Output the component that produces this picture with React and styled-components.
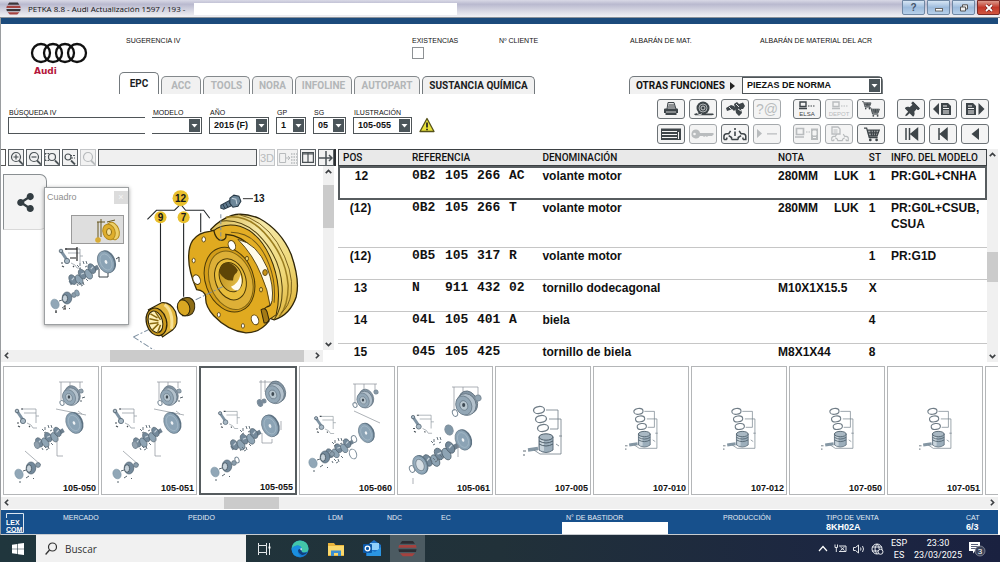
import React from "react";

// React Icons
import { FaShareAlt, FaThumbtack } from "react-icons/fa";

// Styled Components
import styled, { createGlobalStyle, css } from "styled-components";

// Data
const tabs = [
  { name: "EPC", width: 40, active: true },
  { name: "ACC", width: 40, disabled: true },
  { name: "TOOLS", width: 47, disabled: true },
  { name: "NORA", width: 41, disabled: true },
  { name: "INFOLINE", width: 57, disabled: true },
  { name: "AUTOPART", width: 66, disabled: true },
  { name: "SUSTANCIA QUÍMICA", width: 113 },
];

const filters = [
  { id: "modelo", label: "MODELO", value: "", width: 50, open: true },
  { id: "ano", label: "AÑO", value: "2015 (F)", width: 60 },
  { id: "gp", label: "GP", value: "1", width: 30 },
  { id: "sg", label: "SG", value: "05", width: 33 },
  { id: "ilustracion", label: "ILUSTRACIÓN", value: "105-055", width: 59 },
];

const parts = [
  { pos: "12", ref: ["0B2", "105", "266", "AC"], name: "volante motor", note: ["280MM", "LUK"], st: "1", info: "PR:G0L+CNHA" },
  { pos: "(12)", ref: ["0B2", "105", "266", "T"], name: "volante motor", note: ["280MM", "LUK"], st: "1", info: "PR:G0L+CSUB, CSUA", tall: true },
  { pos: "(12)", ref: ["0B5", "105", "317", "R"], name: "volante motor", note: [], st: "1", info: "PR:G1D" },
  { pos: "13", ref: ["N", "911", "432", "02"], name: "tornillo dodecagonal", note: ["M10X1X15.5"], st: "X", info: "" },
  { pos: "14", ref: ["04L", "105", "401", "A"], name: "biela", note: [], st: "4", info: "" },
  { pos: "15", ref: ["045", "105", "425", ""], name: "tornillo de biela", note: ["M8X1X44"], st: "8", info: "" },
];

const sheets = [
  { code: "105-050", kind: "crank" },
  { code: "105-051", kind: "crank" },
  { code: "105-055", kind: "crankWide", active: true },
  { code: "105-060", kind: "crankLow" },
  { code: "105-061", kind: "crankBig" },
  { code: "107-005", kind: "pistonBig" },
  { code: "107-010", kind: "piston" },
  { code: "107-012", kind: "piston" },
  { code: "107-050", kind: "piston" },
  { code: "107-051", kind: "piston" },
];

// Toolbar drawings, all on a 26x18 canvas
const Cart = ({ x = 0, y = 0, s = 1 }) => (
  <g transform={`translate(${x} ${y}) scale(${s})`} fill="none" stroke="currentColor">
    <path d="M3 3h11.500l-2 5.500H4.500z" fill="currentColor" fillOpacity=".45" stroke="none" />
    <path d="M0 1h2.500l2.500 9h8M3 3h11.500l-2 5.500H4.500M4 5.500h9.500M6.500 3l.8 5M9 3v5M11.500 3l-.6 5" strokeWidth="1.200" />
    <circle cx="6" cy="12.300" r="1.300" fill="currentColor" stroke="none" />
    <circle cx="12" cy="12.300" r="1.300" fill="currentColor" stroke="none" />
  </g>
);

const Page = ({ x }) => (
  <g transform={`translate(${x} 3)`}>
    <path d="M0 0h7l3 3v9H0z" fill="currentColor" />
    <path d="M2 3h4M2 5.500h6M2 8h6M2 10h6" stroke="#f4f4f4" />
  </g>
);

const Car = ({ x = 0, y = 0, s = 1 }) => (
  <path
    transform={`translate(${x} ${y}) scale(${s})`}
    d="M1 12V9q0-3 3-3h2l2-3M9 12v-2l-3-2M4 12H1M9 12h7M16 12v-2l3-2M17 3l2 3h2q3 0 3 3v3h-3M4 12v-2M21 12v-2"
    fill="none"
    stroke="currentColor"
    strokeWidth="1.600"
  />
);

const Monitor = ({ x }) => (
  <>
    <path d={`M${x} 2h6v4.500h-6zM${x - 1} 8.500h8`} fill="none" stroke="currentColor" strokeWidth="1.400" />
    <path d={`M${x + 8} 6h7`} stroke="currentColor" strokeDasharray="1.500 1" />
  </>
);

const drawings = {
  print: (
    <>
      <path d="M9 9l1-6.500h6L18 9" fill="#ddd" stroke="currentColor" />
      <path d="M10.500 5h6M10 7h7" stroke="currentColor" />
      <path d="M6 9.500q0-1 1-1h12q1 0 1 1V13h-1.500v2h-11v-2H6z" fill="currentColor" />
      <path d="M8 12h10" stroke="#f4f4f4" strokeWidth=".8" />
    </>
  ),
  wheel: (
    <>
      <circle cx="13" cy="8" r="6.500" fill="currentColor" />
      <circle cx="13" cy="8" r="4" fill="none" stroke="#c9cccd" strokeWidth=".8" />
      <circle cx="13" cy="8" r="2" fill="none" stroke="#e8e8e8" strokeWidth=".8" />
      <path d="M4 14l5-1.500 2 1h12l1 1-2 .8H5z" fill="currentColor" />
      <path d="M7 13.500l3 1.200 2-1" fill="none" stroke="#fff" strokeWidth=".8" />
    </>
  ),
  binoculars: (
    <>
      <path d="M4 8l5-3 3 1 2 3-2 2-2-2-2 1-3 1z" fill="currentColor" />
      <path d="M12 4l3-2 2 2 4-1.500 2 3.500-2 3h-2l1 4-3 3-3-3-1-5z" fill="currentColor" />
      <path d="M14 4l3 3M16 9l3 2M7 7l2 2" stroke="#f4f4f4" strokeWidth=".9" />
    </>
  ),
  mail: (
    <text x="13" y="14" textAnchor="middle" fontSize="14" fontFamily="Liberation Sans" fill="currentColor">?@</text>
  ),
  elsa: (
    <>
      <Monitor x={6} />
      <text x="13" y="16" textAnchor="middle" fontSize="6" fontFamily="Liberation Sans" fill="currentColor">ELSA</text>
    </>
  ),
  depot: (
    <>
      <Monitor x={7} />
      <text x="13" y="16" textAnchor="middle" fontSize="6" fontFamily="Liberation Sans" fill="currentColor">DEPOT</text>
    </>
  ),
  carts: (
    <>
      <Cart x={4} y={1} s={0.62} />
      <Cart x={11} y={7} s={0.72} />
    </>
  ),
  pin: <FaThumbtack x="6" y="2" width="14" height="14" transform="rotate(45 13 9)" />,
  prevPage: (
    <>
      <path d="M9 3v12L3 9z" fill="currentColor" />
      <Page x={11} />
    </>
  ),
  nextPage: (
    <>
      <Page x={4} />
      <path d="M16.500 3v12l6-6z" fill="currentColor" />
    </>
  ),
  list: (
    <>
      <path d="M3 3.500h20V15H3z" fill="currentColor" />
      <path d="M4 6.500h15M4 9.500h15M4 12.500h15M20.500 7v7" stroke="#f4f4f4" />
    </>
  ),
  key: (
    <>
      <path d="M6 4.500a4.500 4.500 0 1 0 4 6.500h3l1 1 1.500-1 1.500 1 1-1h4l2-2-1-1H10a4.500 4.500 0 0 0-4-3.500z" fill="currentColor" />
      <circle cx="4.500" cy="9" r="1.300" fill="#f4f4f4" />
    </>
  ),
  carInfo: (
    <>
      <Car x={1} y={3} s={0.95} />
      <path d="M13 3v2M13 6.500V11" stroke="currentColor" strokeWidth="1.600" />
    </>
  ),
  command: <path d="M3 4l5 4.500L3 13zM13 8.200h10v1.300H13z" fill="currentColor" />,
  server: (
    <>
      <path d="M2.500 3.500h7v6h-7zM1 12h9" fill="none" stroke="currentColor" strokeWidth="1.700" />
      <path d="M12 7h4" stroke="currentColor" strokeDasharray="1.500 1" />
      <path d="M17 3.500h7V15h-7z" fill="currentColor" />
      <path d="M19 6h3v4h-3zM19 12.500h3" fill="#f4f4f4" stroke="#f4f4f4" />
    </>
  ),
  carDoc: (
    <>
      <path d="M6 2h6l2 2v5H6z" fill="none" stroke="currentColor" strokeWidth="1.300" />
      <path d="M7.500 5h4M7.500 7h4" stroke="currentColor" />
      <Car x={5} y={7} s={0.72} />
    </>
  ),
  cart: <Cart x={6} y={2} s={1.05} />,
  first: <path d="M8 3v12M11.500 3v12M19.500 3.500v11L13 9z" fill="currentColor" stroke="currentColor" strokeWidth="1.500" />,
  stepBack: <path d="M9 3v12M17 3.500v11L10.500 9z" fill="currentColor" stroke="currentColor" strokeWidth="1.500" />,
  back: <path d="M17 3v12L9.500 9z" fill="currentColor" />,
};

const toolGroups = [
  [
    [["print", "Imprimir"], ["wheel", "Neumáticos"], ["binoculars", "Buscar pieza"], ["mail", "Consulta", true]],
    [["list", "Lista"], ["key", "Clave", true], ["carInfo", "Datos del vehículo"], ["command", "Comando", true]],
  ],
  [
    [["elsa", "ELSA"], ["depot", "DEPOT", true], ["carts", "Pedidos"]],
    [["server", "Servidor", true], ["carDoc", "Documentos", true], ["cart", "Cesta"]],
  ],
  [
    [["pin", "Fijar"], ["prevPage", "Página anterior"], ["nextPage", "Página siguiente"]],
    [["first", "Primero"], ["stepBack", "Anterior"], ["back", "Atrás"]],
  ],
];

const Lens = ({ children, r = 4.5, cx = 7 }) => (
  <g fill="none" stroke="currentColor" strokeWidth="1.200">
    <circle cx={cx} cy="6" r={r} />
    <path d={`M${cx + 3} 9.500l4 4`} strokeWidth="1.800" />
    {children}
  </g>
);

const DropButton = () => (
  <DropIcon viewBox="0 0 11 13" aria-hidden="true">
    <rect width="11" height="13" fill="#4b555a" />
    <path d="M2.500 5h6l-3 3.500z" fill="#fff" />
  </DropIcon>
);

const Petka = ({ size, color = "#3b3438" }) => (
  <svg width={size} height={size} viewBox="0 0 14 14" aria-hidden="true">
    <path d="M3 1.500h8l1.500 2h-11z" fill={color} />
    <path d="M.8 4.500h12.400l.5 2H.3z" fill="#a5423f" />
    <path d="M.3 7.500h13.400l-.5 2H.8z" fill={color} />
    <path d="M1.500 10.500h11l-2 2.200h-7z" fill="#a5423f" />
  </svg>
);

const ScrollBar = ({ vertical, corner, before, size, after }) => (
  <Track $vertical={vertical} $corner={corner}>
    <Arrow viewBox="0 0 10 10" aria-hidden="true">
      <path d={vertical ? "M2.500 6.500L5 4l2.500 2.500" : "M6.500 2.500L4 5l2.500 2.500"} />
    </Arrow>
    <Rail $grow={before} />
    <Thumb $grow={size} />
    <Rail $grow={after} />
    <Arrow viewBox="0 0 10 10" aria-hidden="true">
      <path d={vertical ? "M2.500 3.500L5 6l2.500-2.500" : "M3.500 2.500L6 5 3.500 7.500"} />
    </Arrow>
  </Track>
);

// Small exploded views of the crankshaft
const Wheel = ({ x, y, s = 1 }) => (
  <g transform={`translate(${x} ${y}) scale(${s})`}>
    <ellipse cx="3" cy="-1" rx="7" ry="9" transform="rotate(-22)" fill="#8496a5" stroke="#5b6b78" strokeWidth=".6" />
    <ellipse cx="1" rx="7.500" ry="8.500" transform="rotate(-22)" fill="#b3c1cc" stroke="#5f6f7c" strokeWidth=".6" />
    <ellipse cx="-1" rx="6" ry="7.500" transform="rotate(-22)" fill="#93a7b6" stroke="#60717f" strokeWidth=".5" />
    <ellipse cx="-1" rx="3" ry="3.800" transform="rotate(-22)" fill="#b9c7d0" stroke="#60717f" strokeWidth=".5" />
    <ellipse cx="-1" rx="1.200" ry="1.600" fill="#3f4a53" />
  </g>
);

const Disc = ({ x, y, s = 1 }) => (
  <g transform={`translate(${x} ${y}) rotate(-24) scale(${s})`}>
    <ellipse cx="1.500" rx="8" ry="11.500" fill="#5f7485" />
    <ellipse rx="8" ry="11.500" fill="#8ba3b5" stroke="#5b6d7b" strokeWidth=".6" />
    <ellipse rx="5.500" ry="8.500" fill="none" stroke="#a9bcc9" strokeWidth=".7" />
    <ellipse rx="1.300" ry="2" fill="#eef2f5" />
  </g>
);

const Ring = ({ x, y, rx = 2.5, ry = 3.5, fill = "none" }) => (
  <ellipse cx={x} cy={y} rx={rx} ry={ry} transform={`rotate(-20 ${x} ${y})`} fill={fill} stroke="#7c8c99" strokeWidth="1" />
);

const Crank = ({ x, y, s = 1 }) => (
  <g transform={`translate(${x} ${y}) rotate(-30) scale(${s})`}>
    <path d="M-15 0h30" stroke="#6d7f8e" strokeWidth="4" />
    {[-11, -6, -1, 4, 9].map((cx, i) => (
      <ellipse key={cx} cx={cx} cy={i % 2 ? 1.5 : -1.5} rx="3" ry="4.800" fill={i % 2 ? "#8ea4b4" : "#74899a"} stroke="#526370" strokeWidth=".6" />
    ))}
    <path d="M-12-1.500l3-1M-2-2l3 .5M8-1.500l3-1" stroke="#c9d4dc" strokeWidth="1" />
  </g>
);

const Rod = ({ x, y, s = 1 }) => (
  <g transform={`translate(${x} ${y}) scale(${s})`}>
    <path d="M-1-2l6 9" stroke="#7e92a2" strokeWidth="3" />
    <circle cx="-1" cy="-2" r="1.800" fill="#a9b9c5" stroke="#4f5f6c" strokeWidth=".8" />
    <circle cx="5" cy="8" r="2.600" fill="#a9b9c5" stroke="#5c6d7a" strokeWidth=".9" />
    <path d="M4-4h14v14M6 0h12M18 3h3M9 10l4 2 2 3h4" fill="none" stroke="#8b949b" strokeWidth=".7" />
    <path d="M3-4h2M11 13l1 1M-1 10h2M0 13l2 1" stroke="#424b52" strokeWidth="1.200" />
  </g>
);

const Ticks = ({ x, y }) => (
  <path
    transform={`translate(${x} ${y})`}
    d="M0 0l2 2M3-2v3M6-4l1 3M9-4l1 3M2 4l2-1M8 2l2-1M2 17l2 2M6 17l1 3M9 14l2 2M4 21l2-1M0 19l1 2"
    stroke="#66737d"
    strokeWidth="1"
    fill="none"
  />
);

const Bearing = ({ x, y }) => (
  <g transform={`translate(${x} ${y})`}>
    <ellipse cx="-12" cy="6" rx="4" ry="5" transform="rotate(-24 -12 6)" fill="#91a7b7" stroke="#7890a1" strokeWidth=".5" />
    <ellipse cx="0" rx="4.800" ry="6" fill="#73899b" stroke="#4e606e" strokeWidth=".7" />
    <ellipse cx="-2" cy=".5" rx="2.600" ry="3.800" fill="#c7d2da" stroke="#3f4f5b" strokeWidth=".8" />
    <circle cx="7" cy="-3" r="2.400" fill="#8b9eac" stroke="#5c6c79" strokeWidth=".7" />
    <path d="M-8 3l3-1M-5 10l3-2M2 10l1 1M-12 14h2" stroke="#59666f" strokeWidth="1" />
  </g>
);

const Bracket = ({ d }) => <path d={d} fill="none" stroke="#899198" strokeWidth=".7" />;

const sheetDrawings = {
  crank: (
    <>
      <Bracket d="M55 15h24M57 15v18M66 15v8M76 15v6" />
      <Wheel x={66} y={30} s={1.05} />
      <Ring x={58} y={36} rx={2} ry={2.5} />
      <Ring x={77} y={24} rx={2} ry={2} fill="#95a5b1" />
      <path d="M78 31l3-1M77 33v2" stroke="#58646d" />
      <Bracket d="M52 42l30 6M21 84l16 14" />
      <Disc x={70} y={56} s={0.95} />
      <Rod x={14} y={46} />
      <Crank x={46} y={71} s={1.05} />
      <Ring x={33} y={78} fill="#91a1ae" />
      <Ticks x={38} y={62} />
      <Bracket d="M53 72v17h6M74 44l4 3" />
      <Bearing x={27} y={101} />
    </>
  ),
  crankWide: (
    <>
      <Bracket d="M60 12v19M64 12v12M58 14h20" />
      <Wheel x={73} y={26} s={1.2} />
      <Ring x={59} y={35} fill="#76899a" />
      <Ring x={63} y={33} rx={2} ry={2} fill="#76899a" />
      <Disc x={69} y={58} s={0.98} />
      <Rod x={20} y={47} s={0.9} />
      <Crank x={45} y={72} s={1.12} />
      <Ticks x={39} y={62} />
      <Bracket d="M61 65v10h10v-4M80 53v9" />
      <Bearing x={26} y={98} />
      <Ring x={36} y={92} rx={2} ry={3} />
    </>
  ),
  crankLow: (
    <>
      <Bracket d="M53 17h24M55 17v20M64 17v9M75 17v6" />
      <Wheel x={64} y={33} />
      <Ring x={55} y={38} rx={2} ry={2.5} />
      <Ring x={76} y={25} rx={2} ry={2} fill="#8799a7" />
      <Bracket d="M54 44l26 12" />
      <Disc x={66} y={66} s={0.88} />
      <Rod x={17} y={53} s={0.9} />
      <Crank x={40} y={82} />
      <Ticks x={32} y={75} />
      <Ring x={54} y={72} />
      <Ring x={53} y={87} rx={3.5} ry={5} />
      <Bearing x={25} y={90} />
    </>
  ),
  crankBig: (
    <>
      <Bracket d="M54 20h26M56 20v24M65 20v8M80 20v9" />
      <Wheel x={67} y={38} s={1.3} />
      <Ring x={57} y={46} />
      <Ring x={80} y={31} rx={3} ry={3} fill="#91a4b2" />
      <Rod x={16} y={52} s={0.95} />
      <Ring x={51} y={63} rx={4} ry={5} fill="#8197a7" />
      <Disc x={65} y={73} s={0.92} />
      <Crank x={43} y={88} s={1.3} />
      <Ticks x={33} y={74} />
      <Disc x={22} y={98} s={0.85} />
      <Ring x={22} y={98} rx={4} ry={6} fill="#d7dfe5" />
      <Ring x={14} y={102} />
      <Bracket d="M60 78v12M15 111v6" />
    </>
  ),
};

const Piston = ({ big }) => (
  <g transform={big ? "translate(27 39)" : "translate(31 41) scale(.84)"} fill="none" stroke="#6f7c86">
    <ellipse cx="16" cy="4" rx="5.500" ry="3.500" transform="rotate(-8 16 4)" strokeWidth="1.300" />
    <ellipse cx="18" cy="13" rx="5.500" ry="3.500" transform="rotate(-8 18 13)" strokeWidth="1.300" />
    <ellipse cx="20" cy="22" rx="5.500" ry="3.500" transform="rotate(-8 20 22)" strokeWidth="1.300" />
    <path d="M16 31q7-5 14 0v13q-7 5-14 0z" fill="#9caebb" stroke="#61717e" />
    <path d="M17 33h4v12q-3 0-4-1z" fill="#cad5dc" stroke="none" />
    <ellipse cx="23" cy="31" rx="7" ry="3.200" fill="#a9b8c3" stroke="#4f5f6b" />
    <path d="M16 35q7 4 14 0M16 38q7 4 14 0" stroke="#4f5f6b" />
    <path d="M5 44l10-1.500" stroke="#8597a4" strokeWidth="3.500" />
    <path d="M0 45h3M1 48v2" stroke="#5f6b75" />
    <path d="M23 4h12v19M26 13h12v35H17l-6-4M27 23h8M36 30h3M33 38l3 2" strokeWidth=".8" />
  </g>
);

const SheetDrawing = ({ kind }) => (
  <SheetSvg viewBox="0 0 94 126" aria-hidden="true">
    {kind.startsWith("piston") ? <Piston big={kind === "pistonBig"} /> : sheetDrawings[kind]}
  </SheetSvg>
);

// Flywheel with its bearing, plug and bolt
const Flywheel = () => (
  <DiagramSvg viewBox="2 166 321 183" preserveAspectRatio="xMidYMid slice" role="img" aria-label="105-055">
    <defs>
      <linearGradient id="rim" x1="0" y1="0" x2="1" y2="1">
        <stop offset="0" stopColor="#d8b64a" />
        <stop offset=".35" stopColor="#f6e9a8" />
        <stop offset=".7" stopColor="#efd878" />
        <stop offset="1" stopColor="#d9a928" />
      </linearGradient>
      <linearGradient id="hub" x1="0" y1="0" x2="1" y2="1">
        <stop offset="0" stopColor="#b98a14" />
        <stop offset="1" stopColor="#f0cc58" />
      </linearGradient>
    </defs>
    <path d="M211 229q9-10 21-14q12-3 27 3q22 12 32 36q9 26 5 42q-6 18-22 23l-17-6z" fill="url(#rim)" stroke="#2d2408" strokeWidth="1.300" />
    <path d="M226 217q21-3 38 15q22 24 24 53q0 20-9 31" fill="none" stroke="#9b7d20" strokeWidth="1.500" />
    <path d="M220 221q21-3 38 13q22 22 24 52q1 20-8 33" fill="none" stroke="#54430f" strokeWidth="1" />
    <path d="M238 214q24 5 39 28q17 28 14 50q-2 14-10 20" fill="none" stroke="#6f5716" strokeWidth=".9" />
    <path d="M213 231q11-9 27-5q22 7 33 38q9 26 3 50l-9 6-17-25z" fill="#e3ae25" stroke="#392d09" />
    <path d="M193 240q6-8 17-9l4-1q2 10 8 10q5-1 4-6q16 1 27 15q15 19 18 44q2 12-4 13q-5 2-1 9l3 5q-9 12-23 12q-18-2-32-17q-9-10-8-19q-1-6-9-7q-8-18-8-32q0-11 4-17z" fill="#e0aa20" stroke="#392d09" strokeWidth="1.300" />
    <path d="M238 239q19 4 29 28q7 18 5 33l-2 5q-2-16-9-31q-8-20-23-35z" fill="#fffbea" stroke="#4c3c0d" strokeWidth=".9" />
    <path d="M231 232q26 0 38 32q7 18 5 38" fill="none" stroke="#6f5716" />
    <path d="M261 309q4-3 6 2l2 8q-2 4-5 3z" fill="#a47a15" stroke="#30260a" />
    <g transform="rotate(-20 230 280)" fill="none" stroke="#4b3a08">
      <ellipse cx="230" cy="279" rx="24" ry="33" fill="#d39d1a" />
      <ellipse cx="231" cy="280" rx="21" ry="30" fill="#ddb037" stroke="#7c6112" />
      <ellipse cx="231" cy="279" rx="15" ry="21" fill="#e8bd3b" />
      <ellipse cx="232" cy="277" rx="11" ry="15" fill="url(#hub)" />
      <path d="M223 269q3-8 9-7q7 1 9 11l-2 2q-4 1-6 6q-8-2-10-12z" fill="#5e4507" stroke="none" />
      <path d="M229 286q8 0 13-8q-1 12-8 14q-4-2-5-6z" fill="#fffdf3" stroke="none" />
    </g>
    <g fill="#fff" stroke="#594410" strokeWidth=".9">
      <ellipse cx="232" cy="245" rx="3.500" ry="5" transform="rotate(-22 232 245)" />
      <ellipse cx="197" cy="279" rx="3.500" ry="5" transform="rotate(-22 197 279)" />
      <ellipse cx="255" cy="319" rx="3.500" ry="5" transform="rotate(-22 255 319)" />
      <ellipse cx="204" cy="239" rx="1.800" ry="2.600" />
      <ellipse cx="194" cy="260" rx="1.500" ry="2.300" />
      <ellipse cx="247" cy="258" rx="1.500" ry="2.300" fill="#f3d66f" />
      <ellipse cx="261" cy="289" rx="1.500" ry="2.300" fill="#f3d66f" />
      <ellipse cx="265" cy="272" rx="2.300" ry="3" fill="#c79216" />
      <ellipse cx="219" cy="314" rx="1.500" ry="2.300" />
      <ellipse cx="243" cy="325" rx="1.500" ry="2.300" />
    </g>
    <path d="M223 286l-27 13M134 336l21-10M134 336l22 14" fill="none" stroke="#7c8ea0" strokeDasharray="6 2 2 2" />
    <g stroke="#2f260a">
      <path d="M180 300q4-4 10-3q6 3 5 10q-1 7-7 8l-5 0z" fill="#8e6d16" />
      <ellipse cx="184" cy="307" rx="6" ry="8" transform="rotate(-18 184 307)" fill="#d9a722" />
      <path d="M149 309l13-7q9-1 14 9q4 13-3 18l-10 7z" fill="#e2b63c" strokeWidth="1.200" />
      <path d="M165 304q9 6 7 24" fill="none" stroke="#f7e298" strokeWidth="3" />
      <ellipse cx="157" cy="321" rx="10" ry="14" transform="rotate(-16 157 321)" fill="#c9981c" strokeWidth="1.200" />
      <ellipse cx="156" cy="321" rx="7" ry="11" transform="rotate(-16 156 321)" fill="#fff1b8" />
      <path d="M151 313l7 4M150 318l9 2M150 323l9-1M153 329l6-6M158 332l3-8M156 311l5 8" stroke="#8a6a10" strokeWidth="1.500" />
    </g>
    <path d="M148 219l9-9h18l6-6 5 6h18l6 8M161 223v78M184 223v73M201 213v19" fill="none" stroke="#23272a" strokeWidth="1.100" />
    <path d="M221 214v26" stroke="#7c8ea0" strokeDasharray="4 2" />
    <path d="M221 205l11-6 3 5-11 5-3-1z" fill="#5e788c" stroke="#2b3d4b" />
    <path d="M223 204l2 4M226 203l2 4M229 201l2 4" stroke="#1f303d" strokeWidth=".8" />
    <path d="M230 198l4-3 5 1 2 5-3 5-5 1-3-4z" fill="#6d8799" stroke="#253744" />
    <path d="M232 198l4 1 1 5" fill="none" stroke="#c5d3dd" />
    <path d="M243 198.500h10" stroke="#333" />
    <g fill="#e8bf2c">
      <circle cx="181" cy="198" r="8" />
      <circle cx="161" cy="217" r="6" />
      <circle cx="184" cy="217" r="6" />
    </g>
    <g fontFamily="Liberation Sans, sans-serif" fontWeight="700" fontSize="10" fill="#16181a" textAnchor="middle">
      <text x="181" y="202">12</text>
      <text x="161" y="221">9</text>
      <text x="184" y="221">7</text>
      <text x="259" y="202">13</text>
    </g>
  </DiagramSvg>
);

const MiniMap = () => (
  <svg width="83" height="118" viewBox="46 205 83 118" aria-hidden="true">
    <rect x="72.500" y="214.500" width="52" height="28" fill="#dedede" stroke="#9a9a9a" />
    <path d="M98 221h8M102 218v18M99 221v17M108 221l8-2" fill="none" stroke="#65551c" />
    <ellipse cx="114" cy="230" rx="6" ry="9" transform="rotate(-20 114 230)" fill="#edd06a" stroke="#b48a1c" />
    <ellipse cx="110" cy="231" rx="6" ry="8" transform="rotate(-20 110 231)" fill="#dfae2c" stroke="#b48a1c" />
    <ellipse cx="110" cy="231" rx="2.500" ry="3.500" fill="#f6e19a" stroke="#8d6c12" />
    <circle cx="99" cy="239" r="2.800" fill="#d9ac35" />
    <g transform="translate(63 252)">
      <Rod x={0} y={0} />
      <path d="M3-4h12M8 5h6M15-6v14" stroke="#222" strokeWidth="1.200" fill="none" />
    </g>
    <Disc x={107} y={261} />
    <path d="M117 258l3-2v5M100 268v8h9v-4" fill="none" stroke="#3c444a" />
    <Crank x={85} y={274} s={1.1} />
    <Ticks x={78} y={264} />
    <Bearing x={68} y={297} />
    <Ring x={78} y={292} rx={2} ry={3} fill="#8ea5b5" />
    <path d="M64 308h3M66 304v4M57 309v3" stroke="#333" />
  </svg>
);

const TitleBar = () => (
  <Title>
    <Petka size={15} />
    <TitleText>PETKA 8.8 - Audi Actualización 1597 / 193 -</TitleText>
    <Redacted />
    <WindowButtons>
      <WindowButton aria-label="Ayuda">?</WindowButton>
      <WindowButton aria-label="Minimizar">
        <svg width="10" height="8" viewBox="0 0 10 8"><rect x="1.500" y="4.500" width="7" height="2.500" fill="#fff" stroke="#666" /></svg>
      </WindowButton>
      <WindowButton aria-label="Restaurar">
        <svg width="10" height="8" viewBox="0 0 10 8"><path d="M3.500 3V.8h5V5H6.500M1.500 3h5v4h-5z" fill="#eee" stroke="#555" /></svg>
      </WindowButton>
      <WindowButton $close aria-label="Cerrar">
        <svg width="10" height="8" viewBox="0 0 10 8"><path d="M2 1l6 6M8 1L2 7" stroke="#611" strokeWidth="3" /><path d="M2 1l6 6M8 1L2 7" stroke="#fff" strokeWidth="1.800" /></svg>
      </WindowButton>
    </WindowButtons>
  </Title>
);

const Header = () => (
  <HeaderArea>
    <Brand>
      <svg width="58" height="22" viewBox="0 0 58 22" role="img" aria-label="Audi">
        <g fill="none" stroke="#111" strokeWidth="2.300">
          <circle cx="11" cy="11" r="9" />
          <circle cx="23" cy="11" r="9" />
          <circle cx="35" cy="11" r="9" />
          <circle cx="47" cy="11" r="9" />
        </g>
      </svg>
      <BrandName>Audi</BrandName>
    </Brand>
    <HeaderMain>
      <InfoRow>
        <Caption>SUGERENCIA IV</Caption>
        <CheckLabel>
          EXISTENCIAS
          <Check type="checkbox" />
        </CheckLabel>
        <Caption>Nº CLIENTE</Caption>
        <Caption>ALBARÁN DE MAT.</Caption>
        <Caption>ALBARÁN DE MATERIAL DEL ACR</Caption>
      </InfoRow>
      <TabRow>
        {tabs.map((tab) => (
          <Tab key={tab.name} $width={tab.width} $active={tab.active} disabled={tab.disabled}>
            {tab.name}
          </Tab>
        ))}
        <OtherFunctions>
          <label htmlFor="otras">OTRAS FUNCIONES</label>
          <svg width="5" height="8" viewBox="0 0 5 8" aria-hidden="true"><path d="M0 0l5 4-5 4z" fill="#222" /></svg>
          <SelectBox $wide>
            <Select id="otras"><option>PIEZAS DE NORMA</option></Select>
            <DropButton />
          </SelectBox>
        </OtherFunctions>
      </TabRow>
    </HeaderMain>
  </HeaderArea>
);

const Filters = () => (
  <FilterArea>
    <Field $width={137}>
      <FieldLabel htmlFor="busqueda">BÚSQUEDA IV</FieldLabel>
      <SearchInput id="busqueda" type="text" />
    </Field>
    {filters.map((f) => (
      <Field key={f.id} $width={f.width}>
        <FieldLabel htmlFor={f.id}>{f.label}</FieldLabel>
        <SelectBox $open={f.open}>
          <Select id={f.id}><option>{f.value}</option></Select>
          <DropButton />
        </SelectBox>
      </Field>
    ))}
    <Warning viewBox="0 0 16 16" aria-hidden="true">
      <path d="M8 1.500l7 13H1z" fill="#e9e13a" stroke="#55521a" strokeWidth="1.300" strokeLinejoin="round" />
      <path d="M8 5.500v5M8 11.800v1.400" stroke="#222" strokeWidth="1.700" />
    </Warning>
    <Tools>
      {toolGroups.map((group, i) => (
        <ToolGroup key={i} $columns={group[0].length}>
          {group.flat().map(([icon, label, disabled]) => (
            <ToolButton key={icon} aria-label={label} disabled={disabled}>
              <svg width="26" height="18" viewBox="0 0 26 18">{drawings[icon]}</svg>
            </ToolButton>
          ))}
        </ToolGroup>
      ))}
    </Tools>
  </FilterArea>
);

const Illustration = () => (
  <IllustrationPane>
    <ViewBar>
      <Stub />
      <ViewButton aria-label="Ampliar">
        <svg width="14" height="14"><Lens><path d="M4.500 6h5M7 3.500v5" /></Lens></svg>
      </ViewButton>
      <ViewButton aria-label="Reducir">
        <svg width="14" height="14"><Lens><path d="M4.500 6h5" /></Lens></svg>
      </ViewButton>
      <ViewButton aria-label="Ampliar zona">
        <svg width="14" height="14"><Lens r={3.5}><path d="M0 2.500h5M0 9.500h5M0 2.500v7" strokeDasharray="1.500 1" /></Lens></svg>
      </ViewButton>
      <ViewButton aria-label="100%">
        <svg width="14" height="14"><Lens r={3} cx={5} /><path d="M7 4.500h6M8 7h4" stroke="currentColor" strokeDasharray="2 1" /></svg>
      </ViewButton>
      <ViewButton disabled aria-label="Buscar">
        <svg width="14" height="14"><Lens /></svg>
      </ViewButton>
      <ViewField aria-label="Título" readOnly />
      <ViewButton disabled>3D</ViewButton>
      <ViewButton disabled $wide aria-label="Mosaico">
        <svg width="18" height="12" viewBox="0 0 18 12"><path d="M.6 1.500h6v9h-6zM7 6h3M9 4l2 2-2 2" fill="none" stroke="currentColor" /><path d="M12 2h6M12 5h6M12 8h6M12 11h6" stroke="currentColor" strokeWidth="1.500" strokeDasharray="1.500 1" /></svg>
      </ViewButton>
      <ViewButton aria-label="Dividir">
        <svg width="12" height="11" viewBox="0 0 12 11"><path d="M.6.600h10.800v9.800H.6zM6 1v9M1 2h10" fill="none" stroke="currentColor" strokeWidth="1.200" /></svg>
      </ViewButton>
      <ViewButton aria-label="Mover división">
        <svg width="14" height="14" viewBox="0 0 14 14"><path d="M7 0v14M0 7h13M10 4l3 3-3 3" fill="none" stroke="currentColor" strokeWidth="1.500" /></svg>
      </ViewButton>
    </ViewBar>
    <CanvasRow>
      <Canvas>
        <Flywheel />
        <SharePanel aria-label="Compartir">
          <FaShareAlt size={19} />
        </SharePanel>
        <MiniWindow>
          <MiniTitle>
            Cuadro
            <MiniClose aria-label="Cerrar cuadro">×</MiniClose>
          </MiniTitle>
          <MiniMap />
        </MiniWindow>
      </Canvas>
      <ScrollBar vertical before={8} size={42} after={108} />
    </CanvasRow>
    <ScrollBar corner before={98} size={194} after={8} />
  </IllustrationPane>
);

const PartsTable = () => (
  <TablePane>
    <TableClip>
      <Table>
        <colgroup>
          <col style={{ width: "11.4%" }} />
          <col style={{ width: "20.1%" }} />
          <col style={{ width: "36.3%" }} />
          <col style={{ width: "14%" }} />
          <col style={{ width: "3.4%" }} />
          <col />
        </colgroup>
        <thead>
          <tr>
            <Th>POS</Th>
            <Th>REFERENCIA</Th>
            <Th>DENOMINACIÓN</Th>
            <Th>NOTA</Th>
            <Th>ST</Th>
            <Th>INFO. DEL MODELO</Th>
          </tr>
        </thead>
        <tbody>
          {parts.map((part, i) => (
            <Row key={i} $selected={i === 0} $tall={part.tall}>
              <PosCell>{part.pos}</PosCell>
              <Td>
                <Reference>
                  {part.ref.map((group, j) => (
                    <span key={j}>{group}</span>
                  ))}
                </Reference>
              </Td>
              <Td>{part.name}</Td>
              <Td>
                <Note>
                  {part.note.map((n) => (
                    <span key={n}>{n}</span>
                  ))}
                </Note>
              </Td>
              <Td>{part.st}</Td>
              <Td>{part.info}</Td>
            </Row>
          ))}
        </tbody>
      </Table>
    </TableClip>
    <ScrollBar vertical before={92} size={31} after={69} />
  </TablePane>
);

const Status = () => (
  <StatusBar>
    <Lexcom viewBox="0 0 18 20" role="img" aria-label="Lexcom">
      <path d="M.5 5V.5h17v19H.5V19" fill="none" stroke="#dbe6f1" />
      <g fontFamily="Liberation Sans" fontWeight="700" fontSize="7" fill="#fff">
        <text x="0" y="12">LEX</text>
        <text x="0" y="19">COM</text>
      </g>
    </Lexcom>
    <StatusItem>MERCADO</StatusItem>
    <StatusItem>PEDIDO</StatusItem>
    <StatusItem>LDM</StatusItem>
    <StatusItem>NDC</StatusItem>
    <StatusItem>EC</StatusItem>
    <StatusItem>
      <Indent>N° DE BASTIDOR</Indent>
      <StatusBlank />
    </StatusItem>
    <StatusItem>PRODUCCIÓN</StatusItem>
    <StatusItem>
      TIPO DE VENTA
      <StatusValue>8KH02A</StatusValue>
    </StatusItem>
    <StatusItem>
      CAT
      <StatusValue>6/3</StatusValue>
    </StatusItem>
  </StatusBar>
);

const TaskBar = () => (
  <Task>
    <TaskButton aria-label="Inicio">
      <svg width="12" height="12" viewBox="0 0 12 12"><path d="M0 1.700l5.400-.8v4.800H0zM6 .8L12 0v5.700H6zM0 6.300h5.400v4.800L0 10.300zM6 6.300h6V12l-6-.8z" fill="#fff" /></svg>
    </TaskButton>
    <SearchBox>
      <svg width="12" height="14" viewBox="0 0 12 14" aria-hidden="true"><circle cx="7.500" cy="5" r="4" fill="none" stroke="#333" strokeWidth="1.200" /><path d="M4.500 8L.6 12.500" stroke="#333" strokeWidth="1.300" /></svg>
      <SearchText placeholder="Buscar" aria-label="Buscar" />
    </SearchBox>
    <TaskButton aria-label="Vista de tareas">
      <svg width="13" height="12" viewBox="0 0 13 12" fill="none" stroke="#e6eaec"><path d="M.5 0v2.500h8V0M.5 12V9.500h8V12M.5 2.500v7M8.500 2.500v7M11.500 0v12" /><path d="M10.500 3.500h2v2h-2z" fill="#fff" stroke="none" /></svg>
    </TaskButton>
    <TaskButton aria-label="Edge">
      <svg width="18" height="18" viewBox="0 0 18 18">
        <circle cx="9" cy="9" r="8.500" fill="#1679cf" />
        <path d="M.6 9Q1 1 9 .5q8 .5 8.500 8 0 4-4.500 4-3-.1-2.500-2.500Q11 6 7 5.500q-4 0-6.400 3.500z" fill="#43c6a9" />
        <path d="M.6 9Q2 5.500 7 5.500q4 .5 3.500 4-2-1-3.500 1-1 3 3 6Q1 17.500.6 9z" fill="#1a8fe0" />
        <path d="M7 10q2-2 3.500 0-.5 3 3 2.800l2.500-.6q-2 3.500-5.500 2.500Q7 13 7 10z" fill="#123f7a" />
        <path d="M9.500 10q-.5-2 1-2 .5 1 0 2.500z" fill="#fff" />
      </svg>
    </TaskButton>
    <TaskButton aria-label="Explorador">
      <svg width="16" height="14" viewBox="0 0 16 14"><path d="M0 1h6l1.500 2H16v11H0z" fill="#e9b43c" /><path d="M0 4h16v9H0z" fill="#fbd96c" /><path d="M3 14V8.500h10V14h-3v-3H6v3z" fill="#3c8fd2" /></svg>
    </TaskButton>
    <TaskButton aria-label="Outlook">
      <svg width="18" height="17" viewBox="0 0 18 17"><path d="M3 6l8-6 7 5v11H3z" fill="#1d71c6" /><path d="M7 3h9v7H7z" fill="#8fd0fb" /><path d="M4 8l8 4 6-5v9H4z" fill="#2b95e2" /><rect y="4" width="9" height="9" rx="1" fill="#0c59a8" /><circle cx="4.500" cy="8.500" r="2.300" fill="none" stroke="#fff" strokeWidth="1.300" /></svg>
    </TaskButton>
    <TaskButton $active aria-label="PETKA">
      <Petka size={19} color="#2c2d33" />
    </TaskButton>
    <Tray>
      <svg width="10" height="7" viewBox="0 0 10 7" fill="none" stroke="#fff"><path d="M1 6l4-4.500L9 6" strokeWidth="1.200" /></svg>
      <svg width="13" height="9" viewBox="0 0 13 9" fill="none" stroke="#e2e5ea"><path d="M5 2h7v5.500H5M1 .5v3h2.500v-3M2.300 4v4M6.500 3l4 3.500M10.500 3l-4 3.500" /></svg>
      <svg width="12" height="10" viewBox="0 0 12 10" fill="none" stroke="#e2e5ea"><path d="M.5 3.500h2L5.500 1v8l-3-2.500h-2zM7.500 3.500q1 1.500 0 3M9.500 2q2 3 0 6" /></svg>
      <svg width="13" height="12" viewBox="0 0 13 12" fill="none" stroke="#e8ebef"><circle cx="6" cy="6" r="5" /><path d="M1 4h10M1 8h6M6 1q-4 5 0 10M6 1q3 3 2 5" /><circle cx="9.500" cy="8.800" r="2.500" fill="#1c2540" /></svg>
      <TrayText><span>ESP</span><span>ES</span></TrayText>
      <TrayText $wide><span>23:30</span><span>23/03/2025</span></TrayText>
      <svg width="18" height="17" viewBox="0 0 18 17">
        <path d="M1 2h11v9H7l-2 2.500V11H1z" fill="#fff" />
        <path d="M3 4.500h7M3 6.500h7M3 8.500h5" stroke="#59607a" />
        <circle cx="12" cy="11" r="5" fill="#3b4258" stroke="#a9adba" strokeWidth=".6" />
        <text x="12" y="14" textAnchor="middle" fontSize="8" fontFamily="Liberation Sans" fill="#fff">3</text>
      </svg>
    </Tray>
  </Task>
);

const App = () => {
  return (
    <>
      <GlobalStyle />
      <Screen>
        <TitleBar />
        <Window>
          <BlueStrip />
          <Header />
          <Filters />
          <Main>
            <Illustration />
            <PartsTable />
          </Main>
          <Sheets>
            {sheets.map((sheet) => (
              <Sheet key={sheet.code} $active={sheet.active}>
                <SheetDrawing kind={sheet.kind} />
                <SheetCode>{sheet.code}</SheetCode>
              </Sheet>
            ))}
            <Sheet aria-label="Siguiente" />
          </Sheets>
          <ScrollBar before={210} size={55} after={702} />
          <Status />
        </Window>
        <TaskBar />
      </Screen>
    </>
  );
};

const GlobalStyle = createGlobalStyle`
  * {
    box-sizing: border-box;
  }
  body {
    margin: 0;
    background: #fff;
    color: #111;
    font-family: "Liberation Sans", Arial, sans-serif;
  }
  button, input, select {
    margin: 0;
    padding: 0;
    font: inherit;
    color: inherit;
    border-radius: 0;
  }
  svg {
    display: block;
    flex: none;
  }
`;

const Screen = styled.div`
  display: flex;
  flex-direction: column;
  height: 100vh;
  overflow: hidden;
`;

const Title = styled.header`
  display: flex;
  align-items: center;
  height: 18px;
  padding-left: 6px;
  background: linear-gradient(#d9d9e6, #b9b9cf 25%, #dcdce6 70%, #f1f1f4);
  border-bottom: 1px solid #8b929a;
`;

const TitleText = styled.span`
  min-width: 166px;
  margin-left: 7px;
  font-family: "Open Sans", sans-serif;
  font-size: 8px;
  line-height: 12px;
  white-space: nowrap;
`;

const Redacted = styled.div`
  width: 263px;
  height: 12px;
  background: #fff;
`;

const WindowButtons = styled.div`
  display: flex;
  gap: 2px;
  align-self: flex-start;
  margin-left: auto;
`;

const WindowButton = styled.button`
  display: flex;
  align-items: center;
  justify-content: center;
  width: 23px;
  height: 15px;
  border: 1px solid ${(p) => (p.$close ? "#7a2a26" : "#6f87a3")};
  border-radius: 0 0 2px 2px;
  background: ${(p) =>
    p.$close ? "linear-gradient(#dc9a8c, #c2382a 50%, #d0553e)" : "linear-gradient(#d6e5f4, #9dbbdc 50%, #b7d0ea)"};
  color: #44546a;
  font-size: 10px;
  font-weight: 700;
`;

const Window = styled.div`
  display: flex;
  flex: 1;
  flex-direction: column;
  min-height: 0;
  margin-right: 2px;
  border-left: 1px solid #9a9da0;
`;

const BlueStrip = styled.div`
  flex: none;
  height: 6px;
  background: #1c4b7c;
`;

const HeaderArea = styled.div`
  display: flex;
  flex: none;
  height: 70px;
`;

const Brand = styled.div`
  width: 118px;
  padding: 18px 0 0 29px;
`;

const BrandName = styled.div`
  padding-left: 4px;
  color: #b5163b;
  font-family: "DejaVu Sans", sans-serif;
  font-size: 9px;
  font-weight: 700;
  line-height: 14px;
`;

const HeaderMain = styled.div`
  display: flex;
  flex: 1;
  flex-direction: column;
  justify-content: space-between;
`;

const InfoRow = styled.div`
  display: grid;
  grid-template-columns: 286fr 87fr 131fr 130fr 238fr;
  padding: 12px 0 0 7px;
`;

const caption = css`
  font-size: 7px;
  line-height: 9px;
  white-space: nowrap;
`;

const smallBold = css`
  font-family: "Liberation Sans", Arial, sans-serif;
  font-size: 9px;
  font-weight: 700;
`;

const Caption = styled.span`
  ${caption}
`;

const CheckLabel = styled.label`
  ${caption}
  display: flex;
  flex-direction: column;
  gap: 2px;
`;

const Check = styled.input`
  appearance: none;
  width: 12px;
  height: 12px;
  border: 1px solid #8d9194;
  background: #fff;
`;

const TabRow = styled.div`
  display: flex;
  align-items: flex-end;
  gap: 2px;
  padding-right: 115px;
  font-family: Roboto, sans-serif;
  font-size: 10px;
  font-weight: 700;
`;

const tabShape = css`
  height: 18px;
  border: 1px solid #73797d;
  border-bottom: 0;
  border-radius: 5px 5px 0 0;
  background: #f1f1f1;
`;

const Tab = styled.button`
  ${tabShape}
  width: ${(p) => p.$width}px;
  white-space: nowrap;
  color: #1b1d1f;
  &:disabled {
    color: #b3b6b8;
    border-color: #84898c;
  }
  ${(p) =>
    p.$active &&
    css`
      height: 22px;
      background: #fff;
    `}
`;

const OtherFunctions = styled.div`
  ${tabShape}
  display: flex;
  align-items: center;
  gap: 5px;
  width: 254px;
  margin-left: auto;
  padding-left: 6px;
  white-space: nowrap;
`;

const SelectBox = styled.div`
  display: flex;
  align-items: center;
  ${(p) => p.$wide && "width: 140px; margin-left: auto;"}
  height: 17px;
  padding-right: 1px;
  border: 1px solid #4f5558;
  border-left-width: ${(p) => (p.$open ? 0 : 1)}px;
  background: #fff;
`;

const Select = styled.select`
  ${smallBold}
  appearance: none;
  flex: 1;
  min-width: 0;
  height: 15px;
  padding-left: 4px;
  border: 0;
  background: transparent;
  line-height: 15px;
`;

const DropIcon = styled.svg`
  width: 11px;
  height: 13px;
`;

const FilterArea = styled.div`
  display: flex;
  flex: none;
  gap: 7px;
  height: 54px;
  padding: 5px 9px 0 7px;
`;

const Field = styled.div`
  width: ${(p) => p.$width}px;
  padding-top: 9px;
`;

const FieldLabel = styled.label`
  ${caption}
  display: block;
  padding-left: 1px;
`;

const SearchInput = styled.input`
  display: block;
  width: 100%;
  height: 17px;
  border: 1px solid #4f5558;
  border-right: 0;
`;

const Warning = styled.svg`
  width: 16px;
  height: 16px;
  margin-top: 18px;
`;

const Tools = styled.div`
  display: flex;
  gap: 12px;
  margin-left: auto;
`;

const ToolGroup = styled.div`
  display: grid;
  grid-template-columns: repeat(${(p) => p.$columns}, 28px);
  grid-auto-rows: 20px;
  gap: 5px 4px;
`;

const ToolButton = styled.button`
  border: 1px solid #6c7276;
  border-radius: 3px;
  background: #f4f4f4;
  color: #3e4549;
  overflow: hidden;
  &:disabled {
    border-color: #a5a9ac;
    color: #b9bcbe;
  }
`;

const Main = styled.main`
  display: grid;
  grid-template-columns: 335fr 662fr;
  grid-template-rows: minmax(0, 1fr);
  flex: 1;
  min-height: 0;
  padding-top: 1px;
`;

const IllustrationPane = styled.section`
  display: flex;
  flex-direction: column;
  min-width: 0;
`;

const ViewBar = styled.div`
  display: flex;
  flex: none;
  gap: 2px;
  height: 17px;
  border-right: 2px solid #2d3033;
`;

const Stub = styled.div`
  width: 5px;
  border: 1px solid #555;
  border-left: 0;
`;

const ViewButton = styled.button`
  display: flex;
  align-items: center;
  justify-content: center;
  width: ${(p) => (p.$wide ? 21 : 16)}px;
  border: 1px solid #5a6064;
  background: #f2f2f2;
  color: #4a5155;
  font-size: 11px;
  &:disabled {
    border-color: #c3c5c7;
    color: #b7babc;
  }
`;

const ViewField = styled.input`
  flex: 1;
  min-width: 0;
  border: 1px solid #55595c;
  background: #f0f0f0;
`;

const CanvasRow = styled.div`
  display: flex;
  flex: 1;
  min-height: 0;
  margin-right: 2px;
`;

const Canvas = styled.div`
  position: relative;
  flex: 1;
  min-width: 0;
`;

const DiagramSvg = styled.svg`
  width: 100%;
  height: 100%;
`;

const SharePanel = styled.button`
  position: absolute;
  top: 8px;
  left: 2px;
  display: flex;
  align-items: center;
  justify-content: center;
  width: 44px;
  height: 56px;
  border: 1px solid #8a8f92;
  border-bottom-color: #d9d9d9;
  border-radius: 0 7px 7px 0;
  background: #f4f4f4;
  color: #333d42;
`;

const MiniWindow = styled.div`
  position: absolute;
  top: 21px;
  left: 43px;
  width: 85px;
  border: 1px solid #9da0a2;
  background: #fff;
  box-shadow: 0 1px 4px rgba(0, 0, 0, 0.4);
`;

const MiniTitle = styled.div`
  display: flex;
  align-items: center;
  justify-content: space-between;
  height: 18px;
  padding-left: 2px;
  color: #8e8e8e;
  font-size: 9px;
`;

const MiniClose = styled.button`
  width: 14px;
  height: 13px;
  border: 0;
  background: #dcdcdc;
  color: #f5f5f5;
  line-height: 12px;
`;

const Track = styled.div`
  display: flex;
  flex: none;
  flex-direction: ${(p) => (p.$vertical ? "column" : "row")};
  ${(p) => (p.$vertical ? "width: 11px;" : "height: 12px;")}
  ${(p) => p.$corner && "margin-right: 13px;"}
  background: #f0f0f0;
`;

const Arrow = styled.svg`
  width: 11px;
  height: 11px;
  fill: none;
  stroke: #3c3f42;
  stroke-width: 1.5;
`;

const Rail = styled.div`
  flex: ${(p) => p.$grow};
`;

const Thumb = styled.div`
  flex: ${(p) => p.$grow};
  background: #cbcbcb;
`;

const TablePane = styled.section`
  display: flex;
  min-width: 0;
  padding-left: 2px;
`;

const TableClip = styled.div`
  flex: 1;
  min-width: 0;
  overflow: hidden;
`;

const Table = styled.table`
  width: 100%;
  table-layout: fixed;
  border-collapse: separate;
  border-spacing: 0;
  font-size: 12px;
  font-weight: 700;
  line-height: 16px;
`;

const Th = styled.th`
  height: 17px;
  padding: 0;
  border: 1px solid #3d4144;
  border-width: 1px 0;
  background: #e9e9e9;
  font-family: Roboto, sans-serif;
  font-size: 10px;
  font-weight: 500;
  line-height: 15px;
  text-align: left;
  white-space: nowrap;
  &:first-child {
    padding-left: 4px;
    border-left-width: 1px;
  }
  &:last-child {
    border-right-width: 1px;
  }
`;

const Td = styled.td`
  padding: 0;
  vertical-align: top;
`;

const PosCell = styled(Td)`
  padding-right: 29px;
  text-align: center;
`;

const Row = styled.tr`
  height: ${(p) => (p.$selected ? 34 : p.$tall ? 48 : 32)}px;
  ${Td} {
    border-bottom: 1px solid #c6c6c6;
  }
  ${(p) =>
    p.$selected &&
    css`
      ${Td} {
        border: solid #575c5f;
        border-width: 2px 0;
      }
      ${Td}:first-child {
        border-left-width: 2px;
      }
      ${Td}:last-child {
        border-right-width: 2px;
      }
    `}
`;

const Reference = styled.div`
  display: grid;
  grid-template-columns: 33px 32px 32px auto;
  font-family: "Liberation Mono", monospace;
  font-size: 13px;
`;

const Note = styled.div`
  display: grid;
  grid-template-columns: 56px auto;
`;

const Sheets = styled.nav`
  display: flex;
  flex: none;
  gap: 2px;
  height: 135px;
  padding: 4px 0 2px 2px;
  overflow: hidden;
`;

const Sheet = styled.button`
  display: flex;
  flex: 0 0 96px;
  flex-direction: column;
  position: relative;
  border: ${(p) => (p.$active ? "2px solid #565c5f" : "1px solid #b4b6b8")};
  background: #fff;
`;

const SheetSvg = styled.svg`
  width: 94px;
  height: 126px;
`;

const SheetCode = styled.span`
  ${smallBold}
  position: absolute;
  right: 2px;
  bottom: 0;
  line-height: 11px;
`;

const StatusBar = styled.footer`
  display: grid;
  grid-template-columns: 62fr 125fr 140fr 59fr 54fr 121fr 161fr 103fr 140fr 32fr;
  flex: none;
  height: 26px;
  padding-top: 3px;
  background: #17508c;
  border-top: 1px solid #fff;
  border-bottom: 1px solid #c8ccd0;
  color: #e4ecf4;
`;

const Lexcom = styled.svg`
  width: 18px;
  height: 20px;
  margin-left: 5px;
`;

const StatusItem = styled.div`
  ${caption}
  display: flex;
  flex-direction: column;
`;

const Indent = styled.span`
  padding-left: 4px;
`;

const StatusBlank = styled.div`
  width: 106px;
  height: 12px;
  background: #fff;
`;

const StatusValue = styled.strong`
  ${smallBold}
  color: #fff;
  line-height: 10px;
`;

const Task = styled.footer`
  display: flex;
  flex: none;
  height: 27px;
  background: linear-gradient(90deg, #20363d, #213139 50%, #1c2642 85%, #1a2140);
`;

const TaskButton = styled.button`
  display: flex;
  align-items: center;
  justify-content: center;
  width: ${(p) => (p.$active ? 35 : 36)}px;
  border: 0;
  background: ${(p) => (p.$active ? "#4c5b62" : "transparent")};
`;

const SearchBox = styled.div`
  display: flex;
  align-items: center;
  gap: 8px;
  width: 210px;
  padding-left: 9px;
  background: #f1f1f1;
`;

const SearchText = styled.input`
  flex: 1;
  min-width: 0;
  border: 0;
  background: transparent;
  font-family: "Open Sans", sans-serif;
  font-size: 10px;
  &::placeholder {
    color: #333;
  }
`;

const Tray = styled.div`
  display: flex;
  align-items: center;
  gap: 6px;
  margin-left: auto;
  padding-right: 14px;
  color: #fff;
`;

const TrayText = styled.div`
  display: flex;
  flex-direction: column;
  align-items: center;
  width: ${(p) => (p.$wide ? 48 : 18)}px;
  font-family: Roboto, sans-serif;
  font-size: 9px;
  line-height: 12px;
`;

export default App;
